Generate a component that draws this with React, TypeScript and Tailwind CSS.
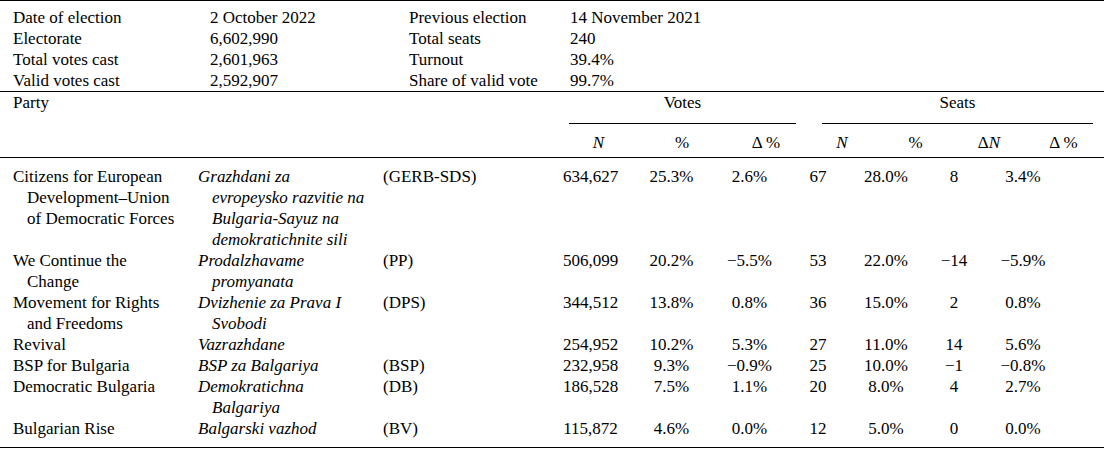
const info = [
  ["Date of election", "2 October 2022", "Previous election", "14 November 2021"],
  ["Electorate", "6,602,990", "Total seats", "240"],
  ["Total votes cast", "2,601,963", "Turnout", "39.4%"],
  ["Valid votes cast", "2,592,907", "Share of valid vote", "99.7%"],
];

type Party = {
  name: string[];
  native: string[];
  abbr: string;
  values: string[];
};

const parties: Party[] = [
  {
    name: ["Citizens for European", "Development–Union", "of Democratic Forces"],
    native: ["Grazhdani za", "evropeysko razvitie na", "Bulgaria-Sayuz na", "demokratichnite sili"],
    abbr: "(GERB-SDS)",
    values: ["634,627", "25.3%", "2.6%", "67", "28.0%", "8", "3.4%"],
  },
  {
    name: ["We Continue the", "Change"],
    native: ["Prodalzhavame", "promyanata"],
    abbr: "(PP)",
    values: ["506,099", "20.2%", "−5.5%", "53", "22.0%", "−14", "−5.9%"],
  },
  {
    name: ["Movement for Rights", "and Freedoms"],
    native: ["Dvizhenie za Prava I", "Svobodi"],
    abbr: "(DPS)",
    values: ["344,512", "13.8%", "0.8%", "36", "15.0%", "2", "0.8%"],
  },
  {
    name: ["Revival"],
    native: ["Vazrazhdane"],
    abbr: "",
    values: ["254,952", "10.2%", "5.3%", "27", "11.0%", "14", "5.6%"],
  },
  {
    name: ["BSP for Bulgaria"],
    native: ["BSP za Balgariya"],
    abbr: "(BSP)",
    values: ["232,958", "9.3%", "−0.9%", "25", "10.0%", "−1", "−0.8%"],
  },
  {
    name: ["Democratic Bulgaria"],
    native: ["Demokratichna", "Balgariya"],
    abbr: "(DB)",
    values: ["186,528", "7.5%", "1.1%", "20", "8.0%", "4", "2.7%"],
  },
  {
    name: ["Bulgarian Rise"],
    native: ["Balgarski vazhod"],
    abbr: "(BV)",
    values: ["115,872", "4.6%", "0.0%", "12", "5.0%", "0", "0.0%"],
  },
];

// widths of the numeric cells in the body (centred text)
const valueWidths = ["w-[79px]", "w-[83px]", "w-[73px]", "w-[64px]", "w-[72px]", "w-[64px]", "w-[74px]"];

const Lines = ({ lines, italic }: { lines: string[]; italic?: boolean }) => (
  <div className={`pl-[14px] -indent-[14px] ${italic ? "italic" : ""}`}>
    {lines.map((l, i) => (
      <span key={i}>
        {i > 0 && <br />}
        {l}
      </span>
    ))}
  </div>
);

const App = () => {
  return (
    <div className="w-[1104px] h-[449px] bg-white text-black text-[17px] leading-[21px] font-['Liberation_Serif','Times_New_Roman',serif]">
      {/* Election summary */}
      <div className="border-t border-b border-black pt-[6px]">
        {info.map((row, i) => (
          <div key={i} className="grid grid-cols-[197px_199px_161px_1fr] pl-[13px]">
            {row.map((cell, j) => (
              <div key={j} className="whitespace-nowrap">{cell}</div>
            ))}
          </div>
        ))}
      </div>

      {/* Column headers */}
      <div className="border-b border-black pb-[4px]">
        <div className="flex">
          <div className="w-[569px] pl-[13px]">Party</div>
          <div className="w-[227px] text-center">Votes</div>
          <div className="w-[26px]" />
          <div className="w-[271px] text-center">Seats</div>
        </div>
        <div className="flex mt-[10px]">
          <div className="w-[569px]" />
          <div className="w-[227px] h-px bg-black" />
          <div className="w-[26px]" />
          <div className="w-[271px] h-px bg-black" />
        </div>
        <div className="flex mt-[8px]">
          <div className="w-[569px]" />
          <div className="w-[59px] text-center italic">N</div>
          <div className="w-[108px] text-center">%</div>
          <div className="w-[60px] text-center">Δ&thinsp;%</div>
          <div className="w-[12px]" />
          <div className="w-[68px] text-center italic">N</div>
          <div className="w-[79px] text-center">%</div>
          <div className="w-[68px] text-center">
            Δ<span className="italic">N</span>
          </div>
          <div className="w-[81px] text-center">Δ&thinsp;%</div>
        </div>
      </div>

      {/* Party results */}
      <div className="border-b border-black pt-[8px] pb-[8px]">
        {parties.map((p, i) => (
          <div key={i} className="flex items-start pl-[13px]">
            <div className="w-[185px]">
              <Lines lines={p.name} />
            </div>
            <div className="w-[185px]">
              <Lines lines={p.native} italic />
            </div>
            <div className="w-[168px]">{p.abbr}</div>
            {p.values.map((v, j) => (
              <div key={j} className={`${valueWidths[j]} text-center whitespace-nowrap`}>
                {v}
              </div>
            ))}
          </div>
        ))}
      </div>
    </div>
  );
};

export default App;
